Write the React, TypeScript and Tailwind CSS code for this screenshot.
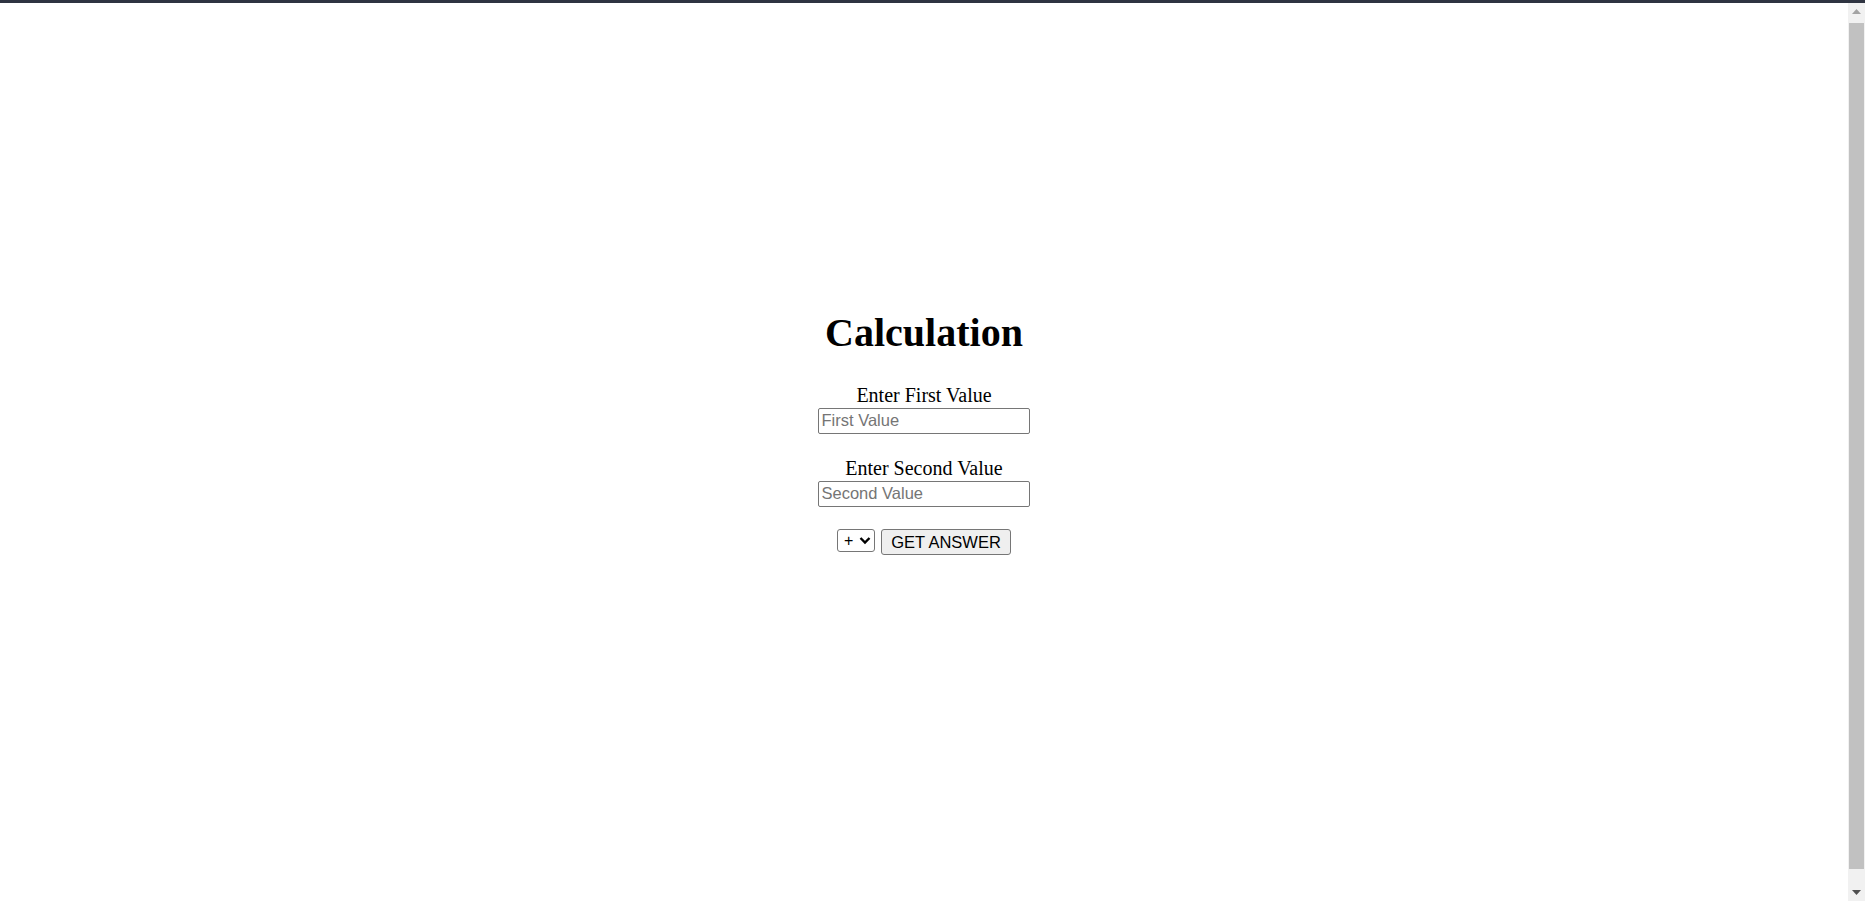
import { useState } from "react"

const ScrollBar = () => (
  <div className="w-[17px] shrink-0 bg-[#f1f1f1] flex flex-col items-center">
    <div className="h-[17px] w-full flex items-center justify-center">
      <svg width="9" height="5" viewBox="0 0 9 5">
        <path d="M0 5 L4.5 0 L9 5 Z" fill="#a3a3a3" />
      </svg>
    </div>
    <div className="mt-[3px] h-[846px] w-[15px] bg-[#c1c1c1]" />
    <div className="flex-1" />
    <div className="h-[17px] w-full flex items-center justify-center">
      <svg width="9" height="5" viewBox="0 0 9 5">
        <path d="M0 0 L9 0 L4.5 5 Z" fill="#505050" />
      </svg>
    </div>
  </div>
)

export default function App() {
  const [first, setFirst] = useState<string>("")
  const [second, setSecond] = useState<string>("")
  const [op, setOp] = useState<string>("+")

  return (
    <div className="h-screen flex flex-col bg-white">
      <div className="h-[3px] bg-[#2f3441] shrink-0" />
      <div className="flex-1 flex min-h-0">
        <div className="flex-1 overflow-hidden">
          <div className="flex flex-col items-center pt-[307px] font-['Liberation_Serif',serif] text-black">
            <h1 className="text-[40px] leading-[46px] font-bold">Calculation</h1>

            <label htmlFor="first" className="mt-[28px] text-[20px] leading-[23px]">
              Enter First Value
            </label>
            <input
              id="first"
              type="text"
              placeholder="First Value"
              value={first}
              onChange={(e) => setFirst(e.target.value)}
              className="mt-[1px] w-[212px] h-[26px] px-[2.5px] pb-[2px] border border-[#767676] rounded-[2px] font-['Liberation_Sans',sans-serif] text-[16.5px] placeholder:text-[#757575] outline-none"
            />

            <label htmlFor="second" className="mt-[23px] text-[20px] leading-[23px]">
              Enter Second Value
            </label>
            <input
              id="second"
              type="text"
              placeholder="Second Value"
              value={second}
              onChange={(e) => setSecond(e.target.value)}
              className="mt-[1px] w-[212px] h-[26px] px-[2.5px] pb-[2px] border border-[#767676] rounded-[2px] font-['Liberation_Sans',sans-serif] text-[16.5px] placeholder:text-[#757575] outline-none"
            />

            <div className="mt-[22px] flex items-start gap-[6px] font-['Liberation_Sans',sans-serif]">
              <div className="relative">
                <select
                  value={op}
                  onChange={(e) => setOp(e.target.value)}
                  className="appearance-none w-[38px] h-[23px] pl-[6px] border border-[#767676] rounded-[3px] bg-white text-[16px] leading-[21px] outline-none"
                >
                  <option value="+">+</option>
                  <option value="-">-</option>
                  <option value="*">*</option>
                  <option value="/">/</option>
                </select>
                <svg
                  className="pointer-events-none absolute right-[4px] top-[7px]"
                  width="12"
                  height="9"
                  viewBox="0 0 12 9"
                >
                  <path d="M1.5 2 L6 6.5 L10.5 2" fill="none" stroke="#000" strokeWidth="2.4" />
                </svg>
              </div>
              <button className="h-[26px] w-[130px] pb-[1px] border border-[#767676] rounded-[3px] bg-[#efefef] text-[16.5px] text-black">
                GET ANSWER
              </button>
            </div>
          </div>
        </div>
        <ScrollBar />
      </div>
    </div>
  )
}
